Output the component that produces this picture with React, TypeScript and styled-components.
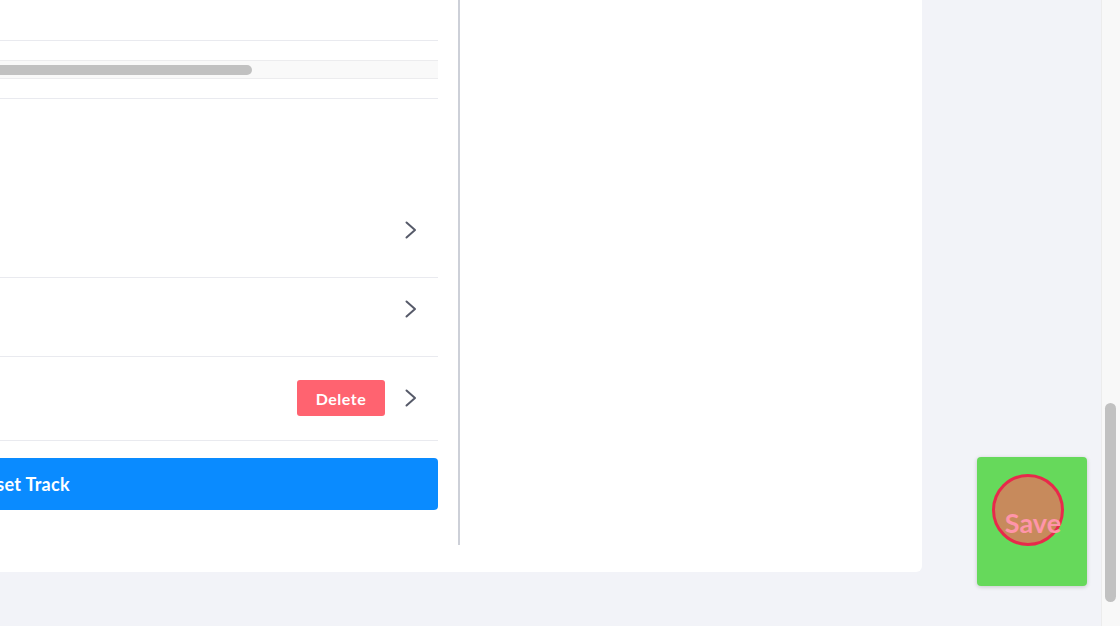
import React from "react";
import styled, { createGlobalStyle } from "styled-components";

const Global = createGlobalStyle`
  html, body {
    margin: 0;
    padding: 0;
    background: #f2f3f8;
    overflow: hidden;
    font-family: Lato, "Liberation Sans", Arial, sans-serif;
  }
`;

const Screen = styled.div`
  display: flex;
  width: 1120px;
  height: 626px;
  overflow: hidden;
  background: #f2f3f8;
`;

const Main = styled.div`
  flex: 1;
  display: flex;
  align-items: flex-start;
  overflow: hidden;
`;

const Card = styled.div`
  flex: none;
  margin-left: -404px;
  margin-top: -20px;
  width: 1326px;
  height: 592px;
  background: #ffffff;
  border-radius: 6px;
  box-sizing: border-box;
  padding-bottom: 27px;
  display: flex;
`;

const LeftCol = styled.div`
  width: 842px;
  display: flex;
  flex-direction: column;
`;

const TopBlock = styled.div`
  height: 60px;
  border-bottom: 1px solid #e9eaef;
`;

const HScroll = styled.div`
  margin-top: 19px;
  height: 17px;
  border-top: 1px solid #ececee;
  border-bottom: 1px solid #ececee;
  background: #f9f9f9;
  display: flex;
  align-items: flex-start;
`;

const HThumb = styled.div`
  margin-top: 4px;
  width: 656px;
  height: 10px;
  border-radius: 5px;
  background: #c1c1c1;
`;

const List = styled.div`
  margin-top: 19px;
  border-top: 1px solid #e9eaef;
  display: flex;
  flex-direction: column;
`;

const Row = styled.div<{ $h: number; $padTop?: number }>`
  height: ${(p) => p.$h}px;
  border-bottom: 1px solid #e9eaef;
  display: flex;
  justify-content: flex-end;
  align-items: ${(p) => (p.$padTop !== undefined ? "flex-start" : "center")};
  padding-top: ${(p) => p.$padTop ?? 0}px;
  padding-bottom: ${(p) => (p.$padTop !== undefined ? 0 : 1)}px;
  padding-right: 21px;
  box-sizing: border-box;
  gap: 20px;
`;

const DeleteBtn = styled.button`
  width: 88px;
  height: 36px;
  border: none;
  border-radius: 3px;
  background: #ff6370;
  color: #ffffff;
  font-family: Lato, "Liberation Sans", Arial, sans-serif;
  font-weight: 700;
  font-size: 16px;
  letter-spacing: 0.5px;
  padding: 0;
`;

const Chevron = styled.svg`
  display: block;
  flex: none;
`;

const PrimaryBtn = styled.button`
  margin-top: 17px;
  height: 52px;
  border: none;
  border-radius: 4px;
  background: #0a8bff;
  color: #ffffff;
  font-family: Lato, "Liberation Sans", Arial, sans-serif;
  font-weight: 700;
  font-size: 18px;
  letter-spacing: 0.3px;
  padding: 0 0 0 11px;
`;

const Divider = styled.div`
  margin-left: 20px;
  width: 2px;
  background: #cdd0d8;
`;

const RightPanel = styled.div`
  flex: 1;
`;

const SaveBtn = styled.button`
  position: relative;
  flex: none;
  align-self: flex-end;
  margin-left: 55px;
  margin-bottom: 40px;
  width: 110px;
  height: 129px;
  border: none;
  border-radius: 4px;
  background: #66d95b;
  box-shadow: 0 1px 4px rgba(0, 0, 0, 0.18);
  padding: 0;
  display: flex;
  align-items: center;
  justify-content: center;
`;

const TouchDot = styled.span`
  position: absolute;
  left: 15px;
  top: 17px;
  width: 66px;
  height: 66px;
  border-radius: 50%;
  border: 3px solid #e8294b;
  background: #c78a5c;
`;

const SaveLabel = styled.span`
  position: relative;
  margin-left: 2px;
  margin-top: 1px;
  color: #ff95aa;
  font-family: Lato, "Liberation Sans", Arial, sans-serif;
  font-weight: 700;
  font-size: 27px;
`;

const ScrollTrack = styled.div`
  flex: none;
  width: 19px;
  height: 626px;
  box-sizing: border-box;
  background: #f8f8f8;
  border-left: 1px solid #ececec;
  padding: 403px 4px 0 3px;
`;

const ScrollThumb = styled.div`
  width: 11px;
  height: 199px;
  border-radius: 6px;
  background: #c1c1c1;
`;

const ChevronIcon = () => (
  <Chevron width="12" height="18" viewBox="0 0 12 18">
    <polyline
      points="1.5,1.5 10,9 1.5,16.5"
      fill="none"
      stroke="#565a69"
      strokeWidth="2"
      strokeLinecap="round"
      strokeLinejoin="round"
    />
  </Chevron>
);

export default function App() {
  return (
    <>
      <Global />
      <Screen>
        <Main>
          <Card>
            <LeftCol>
              <TopBlock />
              <HScroll>
                <HThumb />
              </HScroll>
              <List>
                <Row $h={179} $padTop={122}>
                  <ChevronIcon />
                </Row>
                <Row $h={79} $padTop={22}>
                  <ChevronIcon />
                </Row>
                <Row $h={84}>
                  <DeleteBtn>Delete</DeleteBtn>
                  <ChevronIcon />
                </Row>
              </List>
              <PrimaryBtn>Reset Track</PrimaryBtn>
            </LeftCol>
            <Divider />
            <RightPanel />
          </Card>
          <SaveBtn>
            <TouchDot />
            <SaveLabel>Save</SaveLabel>
          </SaveBtn>
        </Main>
        <ScrollTrack>
          <ScrollThumb />
        </ScrollTrack>
      </Screen>
    </>
  );
}
